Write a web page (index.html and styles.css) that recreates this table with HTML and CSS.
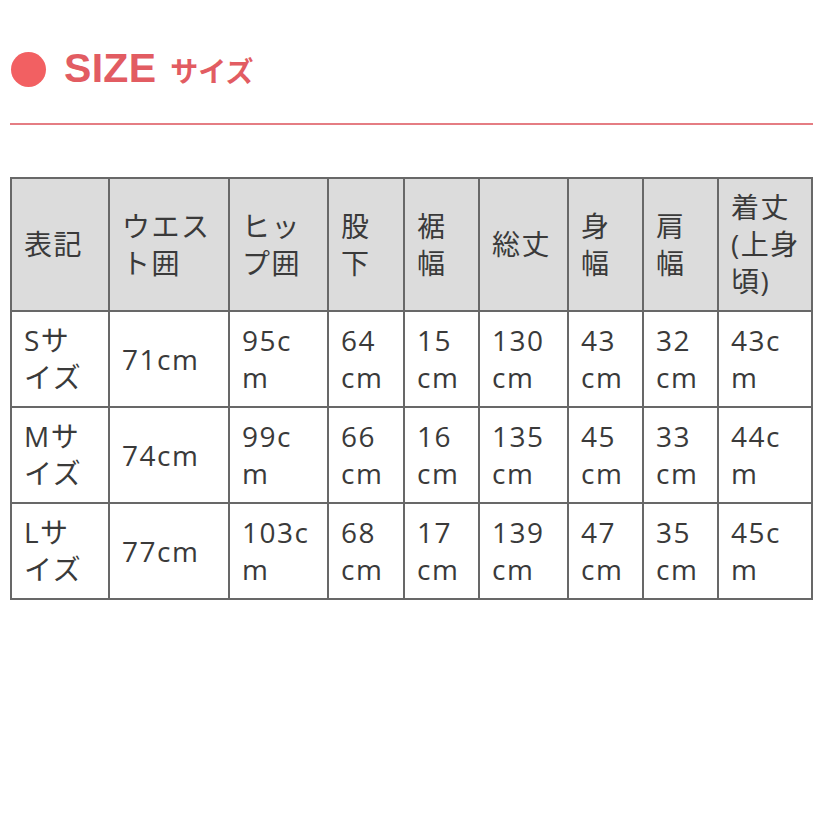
FILE: index.html
```html
<!DOCTYPE html>
<html lang="ja">
<head>
<meta charset="utf-8">
<title>SIZE サイズ</title>
<link rel="stylesheet" href="styles.css">
</head>
<body>
<main class="page">
  <header class="heading">
    <span class="dot"></span>
    <h1 class="heading-title">SIZE<span class="heading-sub">サイズ</span></h1>
  </header>
  <hr class="rule">
  <table class="size-table">
    <colgroup>
      <col class="c1"><col class="c2"><col class="c3"><col class="c4"><col class="c5"><col class="c6"><col class="c7"><col class="c8"><col class="c9">
    </colgroup>
    <thead>
      <tr>
        <th>表記</th>
        <th>ウエスト囲</th>
        <th>ヒップ囲</th>
        <th>股下</th>
        <th>裾幅</th>
        <th>総丈</th>
        <th>身幅</th>
        <th>肩幅</th>
        <th>着丈(上身頃)</th>
      </tr>
    </thead>
    <tbody>
      <tr>
        <td>Sサイズ</td><td>71cm</td><td>95cm</td><td>64cm</td><td>15cm</td><td>130cm</td><td>43cm</td><td>32cm</td><td>43cm</td>
      </tr>
      <tr>
        <td>Mサイズ</td><td>74cm</td><td>99cm</td><td>66cm</td><td>16cm</td><td>135cm</td><td>45cm</td><td>33cm</td><td>44cm</td>
      </tr>
      <tr>
        <td>Lサイズ</td><td>77cm</td><td>103cm</td><td>68cm</td><td>17cm</td><td>139cm</td><td>47cm</td><td>35cm</td><td>45cm</td>
      </tr>
    </tbody>
  </table>
</main>
</body>
</html>
```
FILE: styles.css
```css
html, body {
  margin: 0;
  padding: 0;
  background: #ffffff;
}

.page {
  width: 824px;
  padding: 49px 11px 0 10px;
  box-sizing: border-box;
  font-family: "Open Sans", "Noto Sans CJK JP", sans-serif;
}

.heading {
  display: flex;
  align-items: center;
  height: 40px;
  padding-left: 1px;
}

.dot {
  width: 35px;
  height: 35px;
  border-radius: 50%;
  background: #f26062;
  flex: none;
}

.heading-title {
  margin: 0 0 0 18px;
  font-family: "Liberation Sans", Arial, sans-serif;
  font-weight: 700;
  font-size: 41px;
  line-height: 40px;
  color: #e25c62;
  letter-spacing: 0.3px;
}

.heading-sub {
  font-family: "Noto Sans CJK JP", sans-serif;
  font-weight: 700;
  font-size: 28px;
  margin-left: 14px;
  letter-spacing: 0;
}

.rule {
  margin: 34px 0 0 0;
  border: 0;
  height: 2px;
  background: #e57d83;
}

.size-table {
  margin-top: 52px;
  width: 803px;
  table-layout: fixed;
  border-collapse: collapse;
  font-size: 28px;
  line-height: 37px;
  color: #3a3a3a;
  word-break: break-all;
  letter-spacing: 1.5px;
}

.c1 { width: 98px; }
.c2 { width: 120px; }
.c3 { width: 99px; }
.c4 { width: 76px; }
.c5 { width: 75px; }
.c6 { width: 89px; }
.c7 { width: 75px; }
.c8 { width: 75px; }
.c9 { width: 94px; }

.size-table th,
.size-table td {
  border: 2px solid #686868;
  padding: 10px 14px 10px 12px;
  text-align: left;
  vertical-align: middle;
  font-weight: 400;
}

.size-table th:last-child,
.size-table td:last-child {
  padding-right: 8px;
}

.size-table th {
  background: #dcdcdc;
}

.size-table td {
  background: #ffffff;
}
```
